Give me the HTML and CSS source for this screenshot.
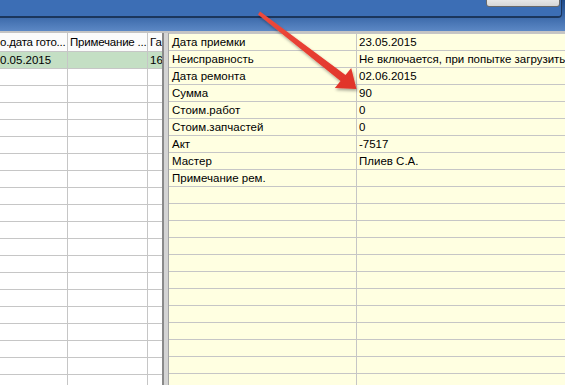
FILE: index.html
```html
<!DOCTYPE html>
<html lang="ru">
<head>
<meta charset="utf-8">
<title>Ремонт</title>
<link rel="stylesheet" href="styles.css">
</head>
<body>
<div class="screen">
  <div class="titlebar">
    <div class="panel"></div>
    <div class="btn"></div>
  </div>
  <div class="sep"></div>
  <div class="main">
    <div class="left">
      <div class="lrow lhead"><div class="lc c1">о.дата гото...</div><div class="lc c2">Примечание ...</div><div class="lc c3">Га</div></div>
      <div class="lrow sel"><div class="lc c1">0.05.2015</div><div class="lc c2"></div><div class="lc c3">16</div></div>
      <div class="lrow"><div class="lc c1"></div><div class="lc c2"></div><div class="lc c3"></div></div>
      <div class="lrow"><div class="lc c1"></div><div class="lc c2"></div><div class="lc c3"></div></div>
      <div class="lrow"><div class="lc c1"></div><div class="lc c2"></div><div class="lc c3"></div></div>
      <div class="lrow"><div class="lc c1"></div><div class="lc c2"></div><div class="lc c3"></div></div>
      <div class="lrow"><div class="lc c1"></div><div class="lc c2"></div><div class="lc c3"></div></div>
      <div class="lrow"><div class="lc c1"></div><div class="lc c2"></div><div class="lc c3"></div></div>
      <div class="lrow"><div class="lc c1"></div><div class="lc c2"></div><div class="lc c3"></div></div>
      <div class="lrow"><div class="lc c1"></div><div class="lc c2"></div><div class="lc c3"></div></div>
      <div class="lrow"><div class="lc c1"></div><div class="lc c2"></div><div class="lc c3"></div></div>
      <div class="lrow"><div class="lc c1"></div><div class="lc c2"></div><div class="lc c3"></div></div>
      <div class="lrow"><div class="lc c1"></div><div class="lc c2"></div><div class="lc c3"></div></div>
      <div class="lrow"><div class="lc c1"></div><div class="lc c2"></div><div class="lc c3"></div></div>
      <div class="lrow"><div class="lc c1"></div><div class="lc c2"></div><div class="lc c3"></div></div>
      <div class="lrow"><div class="lc c1"></div><div class="lc c2"></div><div class="lc c3"></div></div>
      <div class="lrow"><div class="lc c1"></div><div class="lc c2"></div><div class="lc c3"></div></div>
      <div class="lrow"><div class="lc c1"></div><div class="lc c2"></div><div class="lc c3"></div></div>
      <div class="lrow"><div class="lc c1"></div><div class="lc c2"></div><div class="lc c3"></div></div>
      <div class="lrow"><div class="lc c1"></div><div class="lc c2"></div><div class="lc c3"></div></div>
      <div class="lrow"><div class="lc c1"></div><div class="lc c2"></div><div class="lc c3"></div></div>
    </div>
    <div class="splitter"></div>
    <div class="right">
      <div class="rrow"><div class="rl">Дата приемки</div><div class="rv">23.05.2015</div></div>
      <div class="rrow"><div class="rl">Неисправность</div><div class="rv">Не включается, при попытке загрузиться</div></div>
      <div class="rrow"><div class="rl">Дата ремонта</div><div class="rv">02.06.2015</div></div>
      <div class="rrow"><div class="rl">Сумма</div><div class="rv">90</div></div>
      <div class="rrow"><div class="rl">Стоим.работ</div><div class="rv">0</div></div>
      <div class="rrow"><div class="rl">Стоим.запчастей</div><div class="rv">0</div></div>
      <div class="rrow"><div class="rl">Акт</div><div class="rv">-7517</div></div>
      <div class="rrow"><div class="rl">Мастер</div><div class="rv">Плиев С.А.</div></div>
      <div class="rrow"><div class="rl">Примечание рем.</div><div class="rv"></div></div>
      <div class="rrow"><div class="rl"></div><div class="rv"></div></div>
      <div class="rrow"><div class="rl"></div><div class="rv"></div></div>
      <div class="rrow"><div class="rl"></div><div class="rv"></div></div>
      <div class="rrow"><div class="rl"></div><div class="rv"></div></div>
      <div class="rrow"><div class="rl"></div><div class="rv"></div></div>
      <div class="rrow"><div class="rl"></div><div class="rv"></div></div>
      <div class="rrow"><div class="rl"></div><div class="rv"></div></div>
      <div class="rrow"><div class="rl"></div><div class="rv"></div></div>
      <div class="rrow"><div class="rl"></div><div class="rv"></div></div>
      <div class="rrow"><div class="rl"></div><div class="rv"></div></div>
      <div class="rrow"><div class="rl"></div><div class="rv"></div></div>
      <div class="rrow"><div class="rl"></div><div class="rv"></div></div>
    </div>
  </div>
  <svg class="arrow" width="565" height="385" viewBox="0 0 565 385" aria-hidden="true">
    <defs>
      <filter id="sh" x="-20%" y="-20%" width="140%" height="140%">
        <feDropShadow dx="1" dy="2" stdDeviation="1.5" flood-color="#000" flood-opacity="0.35"/>
      </filter>
      <linearGradient id="ag" x1="0" y1="0" x2="1" y2="1">
        <stop offset="0" stop-color="#ee4a3c"/>
        <stop offset="1" stop-color="#e0332a"/>
      </linearGradient>
    </defs>
    <polygon filter="url(#sh)" fill="url(#ag)" points="258,14.5 260,11.5 345.5,74.9 351.2,67.9 356.5,89 334.8,88.1 340.5,81.1"/>
  </svg>
</div>
</body>
</html>
```

FILE: styles.css
```css
* { box-sizing: border-box; }
html, body { margin: 0; padding: 0; }
body {
  width: 565px;
  height: 385px;
  overflow: hidden;
  font-family: "Liberation Sans", Arial, sans-serif;
  font-size: 11.5px;
  color: #000;
  background: #fff;
}
.screen {
  position: relative;
  width: 565px;
  height: 385px;
  overflow: hidden;
  display: flex;
  flex-direction: column;
}
.titlebar {
  position: relative;
  height: 31px;
  flex: none;
  background: linear-gradient(#1f4b8a 0%, #3563a4 45%, #5c88c5 100%);
}
.panel {
  width: 562px;
  height: 18px;
  background: #3c6eb5;
  border-right: 1px solid #1b365d;
  border-bottom: 2px solid #1b365d;
  border-bottom-right-radius: 4px;
}
.btn {
  position: absolute;
  left: 486px;
  top: -4px;
  width: 74px;
  height: 11px;
  border: 1px solid #6a6a6a;
  border-radius: 3px;
  background: linear-gradient(#f0f0f0, #d6d6d6);
}
.sep {
  height: 2px;
  flex: none;
  background: #c4c4c4;
}
.main {
  flex: 1;
  display: flex;
  min-height: 0;
  overflow: hidden;
}
.left {
  width: 162px;
  flex: none;
  background: #fff;
  overflow: hidden;
}
.lrow {
  display: grid;
  grid-template-columns: 68px 80px 14px;
  height: 17px;
  border-bottom: 1px solid #c6c6c6;
}
.lhead {
  height: 19px;
  background: #fbfbfb;
}
.lhead .lc {
  line-height: 18px;
  letter-spacing: -0.2px;
}
.lrow.sel { background: #c4dfc4; }
.lc {
  border-right: 1px solid #c6c6c6;
  overflow: hidden;
  white-space: nowrap;
  line-height: 16px;
  padding-left: 2px;
}
.lc.c1 { padding-left: 0; }
.lc.c3 { border-right: none; }
.splitter {
  width: 7px;
  flex: none;
  border-left: 2px solid #8a8a8a;
  border-right: 1px solid #a4a4a4;
  background: #d4d4d4;
}
.right {
  flex: 1;
  min-width: 0;
  overflow: hidden;
  background: #ffffe1;
  border-top: 1px solid #c6c6c6;
}
.rrow {
  display: grid;
  grid-template-columns: 188px 1fr;
  height: 17px;
  border-bottom: 1px solid #c6c6c6;
}
.rl, .rv {
  overflow: hidden;
  white-space: nowrap;
  line-height: 16px;
}
.rl {
  padding-left: 3px;
  border-right: 1px solid #c6c6c6;
}
.rv { padding-left: 2px; }
.arrow {
  position: absolute;
  left: 0;
  top: 0;
  pointer-events: none;
}
```
